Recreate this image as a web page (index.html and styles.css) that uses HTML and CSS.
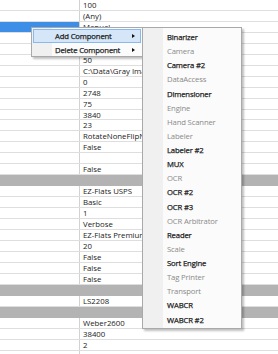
FILE: index.html
```html
<!DOCTYPE html>
<html lang="en">

<head>
    <meta charset="UTF-8">
    <title>Properties</title>
    <link rel="stylesheet" href="styles.css">
</head>

<body>
    <div class="grid" id="grid"></div>

    <div class="menu main-menu">
        <div class="menu-item active">Add Component<span class="arrow"></span></div>
        <div class="menu-item">Delete Component<span class="arrow"></span></div>
    </div>

    <div class="menu sub-menu" id="subMenu"></div>

    <script>
        let rows = [
            "100", "(Any)", "#sel:Manual", "", "", "50", "C:\\Data\\Gray Images", "0", "2748", "75", "3840", "23",
            "RotateNoneFlipNone", "False", "", "False", "#cat", "EZ-Flats USPS", "Basic", "1", "Verbose",
            "EZ-Flats Premium", "20", "False", "False", "False", "#cat", "LS2208", "#cat", "Weber2600",
            "38400", "2", ""
        ];

        let components = [
            ["Binarizer", true], ["Camera", false], ["Camera #2", true], ["DataAccess", false],
            ["Dimensioner", true], ["Engine", false], ["Hand Scanner", false], ["Labeler", false],
            ["Labeler #2", true], ["MUX", true], ["OCR", false], ["OCR #2", true], ["OCR #3", true],
            ["OCR Arbitrator", false], ["Reader", true], ["Scale", false], ["Sort Engine", true],
            ["Tag Printer", false], ["Transport", false], ["WABCR", true], ["WABCR #2", true]
        ];

        const grid = document.getElementById("grid");
        rows.forEach(value => {
            const div = document.createElement("div");
            div.classList.add("row");
            if (value === "#cat") {
                div.classList.add("cat");
                value = "";
            } else if (value.startsWith("#sel:")) {
                div.classList.add("sel");
                value = value.slice(5);
            }
            div.innerHTML = `<div class="name"></div><div class="value">${value}</div>`;
            grid.appendChild(div);
        });

        const subMenu = document.getElementById("subMenu");
        components.forEach(([label, enabled]) => {
            const div = document.createElement("div");
            div.classList.add("menu-item");
            if (!enabled) div.classList.add("disabled");
            div.textContent = label;
            subMenu.appendChild(div);
        });
    </script>
</body>

</html>
```

FILE: styles.css
```css
body {
    margin: 0;
    font-family: "Open Sans", Arial, sans-serif;
    background-color: #fff;
    overflow: hidden;
}

.grid {
    width: 278px;
}

.row {
    display: grid;
    grid-template-columns: 80px 1fr;
    height: 10.96px;
    box-sizing: border-box;
    border-bottom: 1px solid #dedede;
    font-size: 7.8px;
    line-height: 10px;
    color: #222;
}

.name {
    border-right: 1px solid #d2d2d2;
}

.value {
    padding-left: 3px;
    white-space: nowrap;
    overflow: hidden;
}

.row.cat {
    background-color: #b3b3b3;
    border-bottom-color: #b3b3b3;
}

.row.cat .name {
    border-right: none;
}

.row.sel .name {
    background-color: #3d8ee6;
}

.menu {
    position: absolute;
    box-sizing: border-box;
    background-color: #f7f7f7;
    border: 1px solid #a9a9a9;
    box-shadow: 2px 2px 2px rgba(0, 0, 0, 0.25);
    background-image: linear-gradient(to right, #f0f0f0 0, #f0f0f0 20px, #fbfbfb 20px);
}

.main-menu {
    left: 31px;
    top: 27px;
    width: 112px;
    height: 30px;
    padding: 1px;
}

.sub-menu {
    left: 142px;
    top: 27px;
    width: 100px;
    height: 302px;
    padding: 2px 1px;
}

.menu-item {
    position: relative;
    height: 14.14px;
    line-height: 14px;
    font-size: 7.7px;
    letter-spacing: -0.15px;
    font-weight: 400;
    -webkit-text-stroke: 0.25px #1e1e1e;
    color: #1e1e1e;
    white-space: nowrap;
    padding-left: 23px;
    box-sizing: border-box;
}

.main-menu .menu-item {
    height: 14px;
    padding-left: 22px;
}

.menu-item.active {
    background-color: #d4e6f8;
    border: 1px solid #88b9ea;
    line-height: 12px;
    padding-left: 21px;
}

.menu-item.disabled {
    color: #8a8a8a;
    -webkit-text-stroke: 0;
}

.arrow {
    position: absolute;
    right: 6px;
    top: 5px;
    width: 0;
    height: 0;
    border-top: 2px solid transparent;
    border-bottom: 2px solid transparent;
    border-left: 3px solid #111;
}

.menu-item.active .arrow {
    top: 4px;
    right: 5px;
}
```
